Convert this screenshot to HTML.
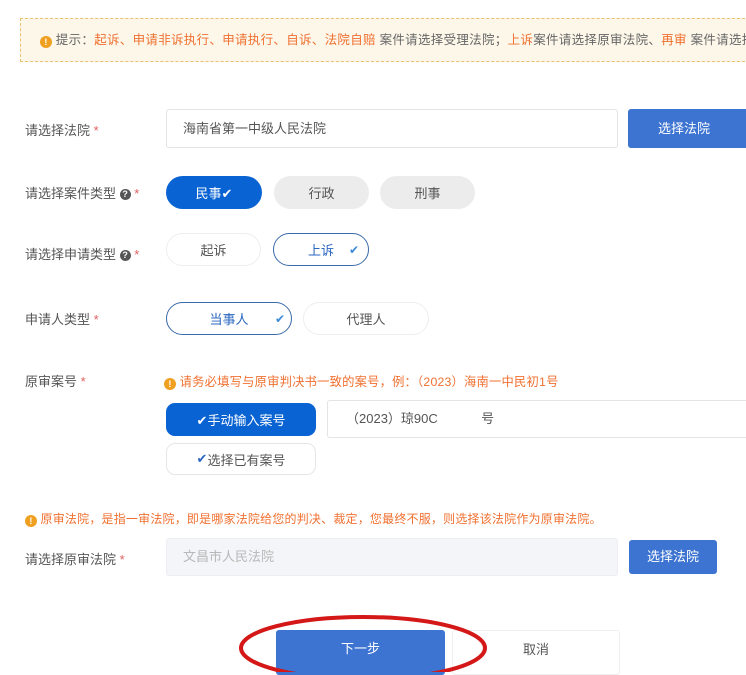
<!DOCTYPE html>
<html><head><meta charset="utf-8"><style>
*{box-sizing:border-box;margin:0;padding:0}
body{width:746px;height:672px;overflow:hidden;background:#fff;font-family:"Liberation Sans","Noto Sans CJK SC",sans-serif;color:#555;position:relative}
.a{position:absolute}
.lbl{font-size:13px;color:#555}
.lbl b{color:#e06060;font-weight:normal}
.pill{position:absolute;border-radius:17px;font-size:13px;display:flex;align-items:center;justify-content:center}
.q{display:inline-block;width:11px;height:11px;border-radius:50%;background:#555;color:#fff;font-size:9px;line-height:11px;text-align:center;font-weight:bold;vertical-align:1px}
.warn{display:inline-block;width:12px;height:12px;border-radius:50%;background:#f0a020;color:#fff;font-size:9px;line-height:12px;text-align:center;font-weight:bold;vertical-align:-1px}
.o{color:#f07030}
</style></head><body>
<div class="a" style="left:20px;top:18px;width:740px;height:44px;border:1px dashed #e8c070;background:#fdf7ea;font-size:12.5px;line-height:42px;padding-left:19px;white-space:nowrap;color:#666;letter-spacing:0.3px"><span class="warn">!</span> 提示：<span class="o">起诉、申请非诉执行、申请执行、自诉、法院自赔</span> 案件请选择受理法院；<span class="o">上诉</span>案件请选择原审法院、<span class="o">再审</span> 案件请选择上级</div>

<div class="a lbl" style="left:25px;top:120px">请选择法院 <b>*</b></div>
<div class="a" style="left:166px;top:109px;width:452px;height:39px;border:1px solid #e4e4e4;border-radius:3px;font-size:13px;color:#555;line-height:37px;padding-left:16px">海南省第一中级人民法院</div>
<div class="a" style="left:628px;top:109px;width:130px;height:39px;background:#3d74d2;border-radius:3px;color:#fff;font-size:13px;line-height:39px;padding-left:30px">选择法院</div>

<div class="a lbl" style="left:25px;top:183px">请选择案件类型 <span class="q">?</span> <b>*</b></div>
<div class="pill" style="left:166px;top:176px;width:96px;height:33px;background:#0a63d2;color:#fff">民事✔</div>
<div class="pill" style="left:274px;top:176px;width:95px;height:33px;background:#ececec;color:#555">行政</div>
<div class="pill" style="left:380px;top:176px;width:95px;height:33px;background:#ececec;color:#555">刑事</div>

<div class="a lbl" style="left:25px;top:244px">请选择申请类型 <span class="q">?</span> <b>*</b></div>
<div class="pill" style="left:166px;top:233px;width:95px;height:33px;border:1px solid #eee;color:#555">起诉</div>
<div class="pill" style="left:273px;top:233px;width:96px;height:33px;border:1.5px solid #3a6aa8;color:#2a66c0">上诉 <span style="position:absolute;right:9px;color:#3a8ad8;font-size:12px">✔</span></div>

<div class="a lbl" style="left:25px;top:309px">申请人类型 <b>*</b></div>
<div class="pill" style="left:166px;top:302px;width:126px;height:33px;border:1.5px solid #3a6aa8;color:#2a66c0">当事人<span style="position:absolute;right:6px;color:#3a8ad8;font-size:12px">✔</span></div>
<div class="pill" style="left:303px;top:302px;width:126px;height:33px;border:1px solid #eee;color:#555">代理人</div>

<div class="a lbl" style="left:25px;top:371px">原审案号 <b>*</b></div>
<div class="a o" style="left:164px;top:372px;font-size:12.3px;letter-spacing:0.2px;white-space:nowrap"><span class="warn">!</span> 请务必填写与原审判决书一致的案号，例：（2023）海南一中民初1号</div>
<div class="pill" style="left:166px;top:403px;width:150px;height:33px;background:#0a63d2;color:#fff;border-radius:9px">✔手动输入案号</div>
<div class="a" style="left:327px;top:400px;width:430px;height:38px;border:1px solid #e4e4e4;border-radius:3px;font-size:13px;color:#555;line-height:36px;padding-left:18px">（2023）琼90C&nbsp;&nbsp;&nbsp;&nbsp;&nbsp;&nbsp;&nbsp;&nbsp;&nbsp;&nbsp;&nbsp;&nbsp;号</div>
<div class="pill" style="left:166px;top:443px;width:150px;height:32px;border:1px solid #e6e6e6;color:#555;border-radius:9px"><span style="color:#2a66c0">✔</span>选择已有案号</div>

<div class="a o" style="left:25px;top:510px;font-size:12px;letter-spacing:0.2px;white-space:nowrap"><span class="warn">!</span> 原审法院，是指一审法院，即是哪家法院给您的判决、裁定，您最终不服，则选择该法院作为原审法院。</div>

<div class="a lbl" style="left:25px;top:549px">请选择原审法院 <b>*</b></div>
<div class="a" style="left:166px;top:538px;width:452px;height:38px;background:#f4f5f8;border:1px solid #eceef2;border-radius:3px;font-size:13px;color:#b8b8b8;line-height:36px;padding-left:16px">文昌市人民法院</div>
<div class="a" style="left:629px;top:540px;width:88px;height:34px;background:#3d74d2;border-radius:3px;color:#fff;font-size:13px;line-height:34px;text-align:center">选择法院</div>

<div class="a" style="left:276px;top:630px;width:169px;height:45px;background:#3d74d2;border-radius:3px;color:#fff;font-size:13px;line-height:38px;text-align:center">下一步</div>
<div class="a" style="left:452px;top:630px;width:168px;height:45px;border:1px solid #eee;border-radius:3px;color:#555;font-size:13px;line-height:38px;text-align:center">取消</div>
<svg class="a" style="left:0;top:0" width="746" height="672"><ellipse cx="363" cy="648" rx="122" ry="31" fill="none" stroke="#d41818" stroke-width="4"/></svg>
</body></html>
